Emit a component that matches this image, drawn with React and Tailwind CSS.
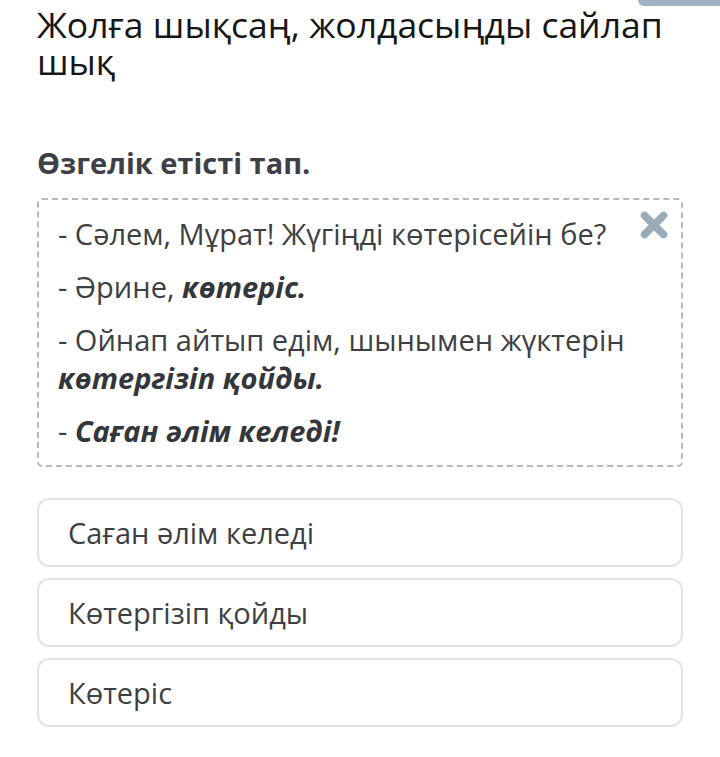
export default function App() {
  return (
    <div className="relative min-h-[757px] w-[720px] bg-white font-['Open_Sans',sans-serif] text-[#3d3f43]">
      <div className="absolute right-0 top-0 h-[6px] w-[82px] rounded-bl-[10px] bg-[#a0b2c1]" />
      <div className="px-[37px] pt-[6px]">
        <h1 className="text-[35.5px] leading-[37px] font-normal text-[#161616]">
          Жолға шықсаң, жолдасыңды сайлап шық
        </h1>
        <h2 className="mt-[64px] text-[29px] leading-[38px] font-bold text-[#3d4046]">
          Өзгелік етісті тап.
        </h2>
        <div className="relative mt-[16px] rounded-[5px] border-2 border-dashed border-[#b8b8b8] pl-[19px] pr-[19px] pt-[15px] pb-[15px] text-[29px] leading-[38px]">
          <svg className="absolute right-[13px] top-[11px]" width="28" height="28" viewBox="0 0 28 28">
            <path d="M4.5 4.5 L23.5 23.5 M23.5 4.5 L4.5 23.5" stroke="#9aabb8" strokeWidth="7.5" strokeLinecap="round" />
          </svg>
          <p>- Сәлем, Мұрат! Жүгіңді көтерісейін бе?</p>
          <p className="mt-[15px]">- Әрине, <b className="italic font-bold text-[#33363a]">көтеріс.</b></p>
          <p className="mt-[15px]">- Ойнап айтып едім, шынымен жүктерін <b className="italic font-bold text-[#33363a]">көтергізіп қойды.</b></p>
          <p className="mt-[15px]">- <b className="italic font-bold text-[#33363a]">Саған әлім келеді!</b></p>
        </div>
        <div className="mt-[31px] flex flex-col gap-[11px]">
          {["Саған әлім келеді", "Көтергізіп қойды", "Көтеріс"].map((t) => (
            <div key={t} className="flex h-[69px] items-center rounded-[12px] border-2 border-[#e4e4e4] pl-[29px] text-[29px] text-[#3d3f43]">
              {t}
            </div>
          ))}
        </div>
      </div>
    </div>
  );
}
